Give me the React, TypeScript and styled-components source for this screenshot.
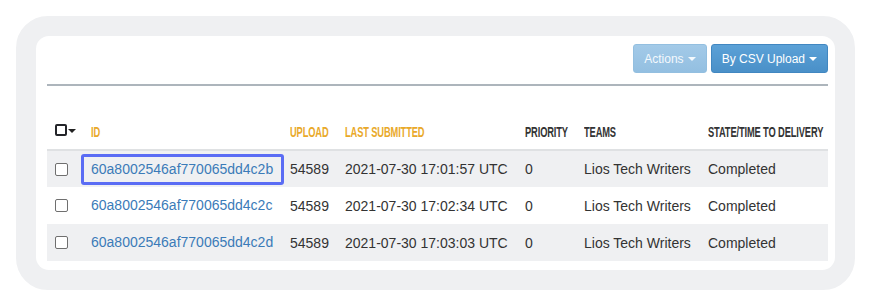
import React from "react";
import styled, { createGlobalStyle } from "styled-components";

const Global = createGlobalStyle`
  html, body { margin: 0; padding: 0; background: #ffffff; }
  body { font-family: "Liberation Sans", Arial, sans-serif; font-size: 14px; color: #333; }
`;

const Page = styled.div`
  width: 871px;
  height: 306px;
  padding: 16px;
  box-sizing: border-box;
`;

const Frame = styled.div`
  width: 839px;
  height: 274px;
  box-sizing: border-box;
  border: 20px solid #eff0f2;
  border-radius: 32px;
  background: #eff0f2;
`;

const Card = styled.div`
  height: 234px;
  background: #ffffff;
  border-radius: 13px;
  padding: 8px 7px 0 11px;
  box-sizing: border-box;
  display: flex;
  flex-direction: column;
`;

const Toolbar = styled.div`
  display: flex;
  justify-content: flex-end;
  gap: 4px;
  padding-bottom: 11px;
  border-bottom: 2px solid #adb5bc;
`;

const Button = styled.button<{ $disabled?: boolean }>`
  height: 29px;
  padding: 0 10px;
  border-radius: 3px;
  border: 1px solid ${(p) => (p.$disabled ? "#93bfe0" : "#4187c1")};
  background: ${(p) =>
    p.$disabled
      ? "linear-gradient(#a3cae8, #93bfe1)"
      : "linear-gradient(#5ba1d7, #4a90c8)"};
  color: ${(p) => (p.$disabled ? "#f4f9fd" : "#ffffff")};
  font-family: "Liberation Sans", Arial, sans-serif;
  font-size: 12px;
  display: flex;
  align-items: center;
  gap: 4px;
  cursor: pointer;
`;

const Caret = styled.span`
  display: inline-block;
  width: 0;
  height: 0;
  border-left: 4px solid transparent;
  border-right: 4px solid transparent;
  border-top: 4px solid currentColor;
  margin-top: 1px;
`;

const Table = styled.table`
  margin-top: 27px;
  width: 781px;
  border-collapse: collapse;
  table-layout: fixed;
`;

const Th = styled.th<{ $sort?: boolean; $w: number }>`
  box-sizing: border-box;
  width: ${(p) => p.$w}px;
  text-align: left;
  padding: 0 8px;
  height: 37px;
  vertical-align: middle;
  color: ${(p) => (p.$sort ? "#e9a92a" : "#333333")};
  border-bottom: 2px solid #dfe1e3;
  white-space: nowrap;
  overflow: visible;
`;

const HeadLabel = styled.span`
  display: inline-block;
  font-family: "Liberation Sans", Arial, sans-serif;
  font-weight: bold;
  font-size: 15px;
  letter-spacing: -0.2px;
  text-transform: uppercase;
  transform: scaleX(0.62);
  transform-origin: left center;
`;

const Row = styled.tr<{ $striped?: boolean }>`
  background: ${(p) => (p.$striped ? "#eff0f2" : "#ffffff")};
  & + & td {
    border-top: 1px solid #dcdee0;
  }
`;

const Td = styled.td`
  box-sizing: border-box;
  height: 37px;
  padding: 0 8px;
  vertical-align: middle;
  white-space: nowrap;
  color: #333;
  font-size: 14px;
`;

const Check = styled.span`
  display: block;
  width: 11px;
  height: 11px;
  border: 1px solid #6f6f6f;
  border-radius: 2px;
  background: #fff;
`;

const SelectAll = styled.span`
  display: inline-flex;
  align-items: center;
  gap: 1px;
  color: #222;
`;

const SelectBox = styled.span`
  display: block;
  width: 8px;
  height: 8px;
  border: 2px solid #24252a;
  border-radius: 2px;
`;

const IdLink = styled.a<{ $focused?: boolean }>`
  color: #3b7bb8;
  text-decoration: none;
  display: inline-block;
  vertical-align: middle;
  margin-left: -10px;
  padding: 4px 8px 4px 7px;
  border: 3px solid ${(p) => (p.$focused ? "#5a6cf4" : "transparent")};
  border-radius: 3px;
  line-height: 17px;
`;

const rows = [
  { id: "60a8002546af770065dd4c2b", time: "2021-07-30 17:01:57 UTC", focused: true },
  { id: "60a8002546af770065dd4c2c", time: "2021-07-30 17:02:34 UTC" },
  { id: "60a8002546af770065dd4c2d", time: "2021-07-30 17:03:03 UTC" },
];

export default function App() {
  return (
    <Page>
      <Global />
      <Frame>
        <Card>
          <Toolbar>
            <Button $disabled>
              Actions <Caret />
            </Button>
            <Button>
              By CSV Upload <Caret />
            </Button>
          </Toolbar>
          <Table>
            <thead>
              <tr>
                <Th $w={36}>
                  <SelectAll>
                    <SelectBox />
                    <Caret />
                  </SelectAll>
                </Th>
                <Th $w={199} $sort><HeadLabel>ID</HeadLabel></Th>
                <Th $w={55} $sort><HeadLabel>Upload</HeadLabel></Th>
                <Th $w={180} $sort><HeadLabel>Last Submitted</HeadLabel></Th>
                <Th $w={59}><HeadLabel>Priority</HeadLabel></Th>
                <Th $w={124}><HeadLabel>Teams</HeadLabel></Th>
                <Th $w={128}><HeadLabel>State/Time to Delivery</HeadLabel></Th>
              </tr>
            </thead>
            <tbody>
              {rows.map((r, i) => (
                <Row key={r.id} $striped={i % 2 === 0}>
                  <Td>
                    <Check />
                  </Td>
                  <Td>
                    <IdLink href="#" $focused={r.focused}>
                      {r.id}
                    </IdLink>
                  </Td>
                  <Td>54589</Td>
                  <Td>{r.time}</Td>
                  <Td>0</Td>
                  <Td>Lios Tech Writers</Td>
                  <Td>Completed</Td>
                </Row>
              ))}
            </tbody>
          </Table>
        </Card>
      </Frame>
    </Page>
  );
}
